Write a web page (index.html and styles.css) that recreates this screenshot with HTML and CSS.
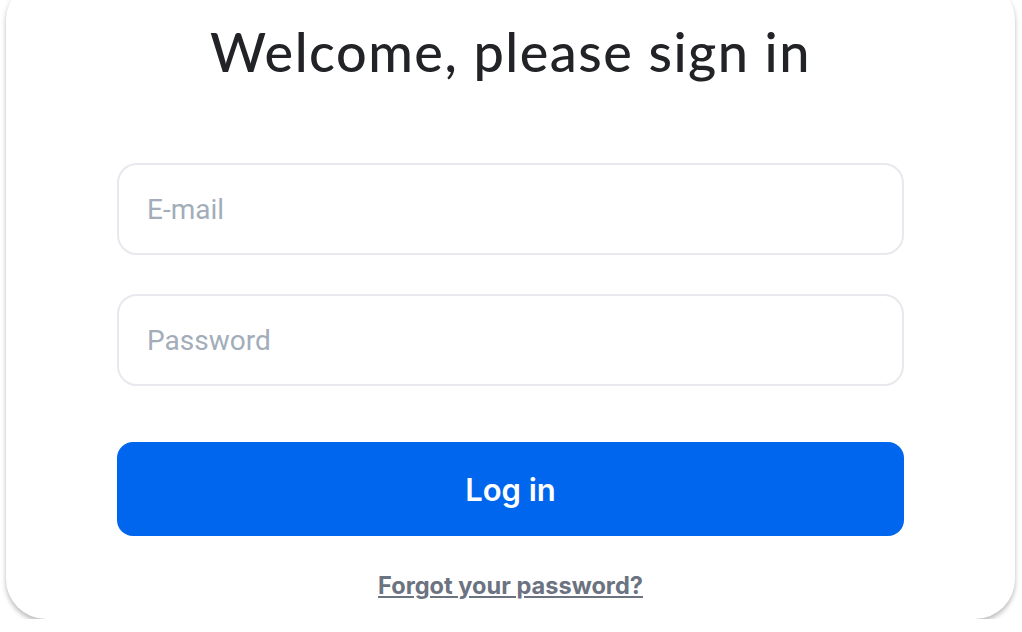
FILE: index.html
```html
<!DOCTYPE html>
<html lang="en">
<head>
    <meta charset="UTF-8">
    <meta name="viewport" content="width=device-width, initial-scale=1.0">
    <title>Sign in</title>
    <link rel="stylesheet" href="styles.css">
</head>
<body>
    <div class="login-card">
        <h1 class="login-title">Welcome, please sign in</h1>

        <form class="login-form">
            <input type="email" class="login-input" placeholder="E-mail">
            <input type="password" class="login-input" placeholder="Password">
            <button type="button" class="login-btn">Log in</button>
            <a href="#" class="forgot-link">Forgot your password?</a>
        </form>
    </div>
</body>
</html>
```

FILE: styles.css
```css
body {
    margin: 0;
    padding: 0 7px 0 6px;
    background-color: #fff;
    font-family: "Inter", "Liberation Sans", sans-serif;
}

/* card runs off the top of the window */
.login-card {
    height: 639px;
    margin-top: -20px;
    box-sizing: border-box;
    padding-top: 45px;
    display: flex;
    flex-direction: column;
    align-items: center;
    background-color: #fff;
    border-radius: 40px;
    box-shadow: 0 3px 5px rgba(0, 0, 0, 0.28);
}

.login-title {
    margin: 0;
    font-family: "Lato", sans-serif;
    font-size: 54px;
    font-weight: 500;
    letter-spacing: 1.5px;
    line-height: 1;
    color: #222326;
}

.login-form {
    width: 787px;
    margin-top: 84px;
    display: flex;
    flex-direction: column;
    align-items: center;
}

.login-input {
    width: 100%;
    height: 92px;
    box-sizing: border-box;
    padding: 0 28px;
    margin-bottom: 39px;
    border: 2px solid #e8e8ee;
    border-radius: 20px;
    font-family: "Roboto", sans-serif;
    font-size: 28px;
    color: #222;
    outline: none;
}

.login-input::placeholder {
    color: #a3adba;
}

.login-input + .login-input {
    margin-bottom: 56px;
}

.login-btn {
    width: 100%;
    height: 94px;
    border: none;
    border-radius: 16px;
    background-color: #0066ee;
    color: #fff;
    font-family: "Inter", sans-serif;
    font-size: 31px;
    font-weight: 600;
    cursor: pointer;
}

.forgot-link {
    margin-top: 38px;
    font-size: 23.6px;
    font-weight: 700;
    line-height: 1;
    color: #6b7280;
    text-decoration: underline;
}
```
